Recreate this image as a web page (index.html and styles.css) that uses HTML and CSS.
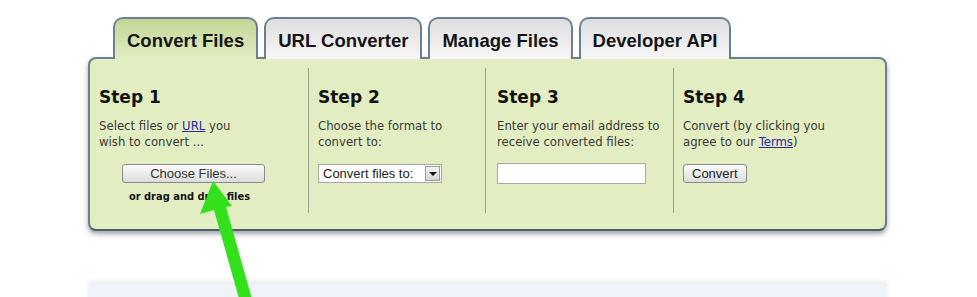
FILE: index.html
```html
<!DOCTYPE html>
<html lang="en">
<head>
    <meta charset="UTF-8">
    <title>Convert Files</title>
    <link rel="stylesheet" href="styles.css">
</head>
<body>
    <div class="page">
        <div class="tabs">
            <a class="tab active" href="#">Convert Files</a>
            <a class="tab" href="#">URL Converter</a>
            <a class="tab" href="#">Manage Files</a>
            <a class="tab" href="#">Developer API</a>
        </div>

        <div class="panel">
            <div class="step">
                <h2>Step 1</h2>
                <p>Select files or <a href="#">URL</a> you<br>wish to convert ...</p>
                <div class="upload">
                    <button class="btn wide">Choose Files...</button>
                    <div class="drop">or drag and drop files</div>
                </div>
            </div>
            <div class="step">
                <h2>Step 2</h2>
                <p>Choose the format to<br>convert to:</p>
                <div class="select">
                    <span>Convert files to:</span>
                    <span class="caret"></span>
                </div>
            </div>
            <div class="step">
                <h2>Step 3</h2>
                <p>Enter your email address to<br>receive converted files:</p>
                <input class="email" type="text">
            </div>
            <div class="step">
                <h2>Step 4</h2>
                <p>Convert (by clicking you<br>agree to our <a href="#">Terms</a>)</p>
                <button class="btn">Convert</button>
            </div>
        </div>

        <div class="strip"></div>

        <svg class="arrow" width="977" height="297" viewBox="0 0 977 297">
            <polygon points="213,181 200,214 214,210 240,302 252,299 226,207 232,206" fill="#33e01c"/>
        </svg>
    </div>
</body>
</html>
```

FILE: styles.css
```css
* {
    margin: 0;
    padding: 0;
    box-sizing: border-box;
}

body {
    background: #fff;
    font-family: "DejaVu Sans Condensed", "DejaVu Sans", sans-serif;
    color: #3a3a3a;
    overflow: hidden;
}

.page {
    position: relative;
    width: 977px;
    height: 297px;
    padding-top: 17px;
}

.tabs {
    display: flex;
    gap: 6px;
    margin-left: 113px;
    height: 40px;
}

.tab {
    position: relative;
    height: 42px;
    padding: 9px 12px 0;
    line-height: 26px;
    font-family: "Liberation Sans", Arial, sans-serif;
    font-weight: bold;
    font-size: 18.5px;
    color: #151515;
    text-decoration: none;
    background: linear-gradient(#dedede, #f7f7f7);
    border: 2px solid #6c7f92;
    border-bottom: none;
    border-radius: 10px 10px 0 0;
}

.tab.active {
    z-index: 2;
    background: linear-gradient(#c3d595, #e2edc2);
}

.panel {
    display: grid;
    grid-template-columns: 218px 177px 188px 1fr;
    margin-left: 88px;
    width: 799px;
    height: 174px;
    padding: 9px 0 16px;
    background: #e2edc2;
    border: 2px solid #6c7f92;
    border-bottom-color: #4f5e6c;
    border-radius: 8px;
    box-shadow: 0 3px 5px rgba(40, 50, 60, 0.45);
}

.step {
    padding-left: 9px;
}

.step + .step {
    border-left: 1px solid #9aa48c;
}

.step:nth-child(3) {
    padding-left: 11px;
}

.step h2 {
    margin-top: 19px;
    font-family: "DejaVu Sans", sans-serif;
    font-size: 17px;
    line-height: 20px;
    color: #121212;
}

.step p {
    margin-top: 11px;
    font-size: 13px;
    line-height: 16px;
}

.step a {
    color: #2a2aa0;
}

.upload {
    width: 181px;
    margin-top: 14px;
    text-align: center;
}

.btn {
    height: 19px;
    padding: 0 8px;
    font-family: "Liberation Sans", Arial, sans-serif;
    font-size: 13px;
    color: #222;
    background: linear-gradient(#fbfbfb, #dcdcdc);
    border: 1px solid #8a8a8a;
    border-radius: 3px;
    margin-top: 14px;
}

.btn.wide {
    width: 143px;
    margin: 0 0 0 23px;
    display: block;
    color: #333;
}

.drop {
    margin-top: 7px;
    font-size: 11px;
    font-weight: bold;
    line-height: 14px;
    color: #141414;
}

.select {
    display: flex;
    align-items: center;
    justify-content: space-between;
    width: 124px;
    height: 19px;
    margin-top: 14px;
    padding: 0 1px 0 4px;
    font-family: "Liberation Sans", Arial, sans-serif;
    font-size: 13px;
    color: #222;
    background: #fff;
    border: 1px solid #a5a5a5;
}

.caret {
    position: relative;
    width: 15px;
    height: 15px;
    background: linear-gradient(#f4f4f4, #d4d4d4);
    border: 1px solid #9a9a9a;
}

.caret::after {
    content: "";
    position: absolute;
    left: 3px;
    top: 5px;
    border-left: 4px solid transparent;
    border-right: 4px solid transparent;
    border-top: 4px solid #111;
}

.email {
    display: block;
    width: 149px;
    height: 21px;
    margin-top: 13px;
    background: #fff;
    border: 1px solid #a9a9a9;
}

.strip {
    margin: 53px 0 0 88px;
    width: 799px;
    height: 20px;
    background: #eef4fa;
    box-shadow: 0 -3px 4px rgba(0, 0, 0, 0.07);
}

.arrow {
    position: absolute;
    left: 0;
    top: 0;
    pointer-events: none;
}
```
